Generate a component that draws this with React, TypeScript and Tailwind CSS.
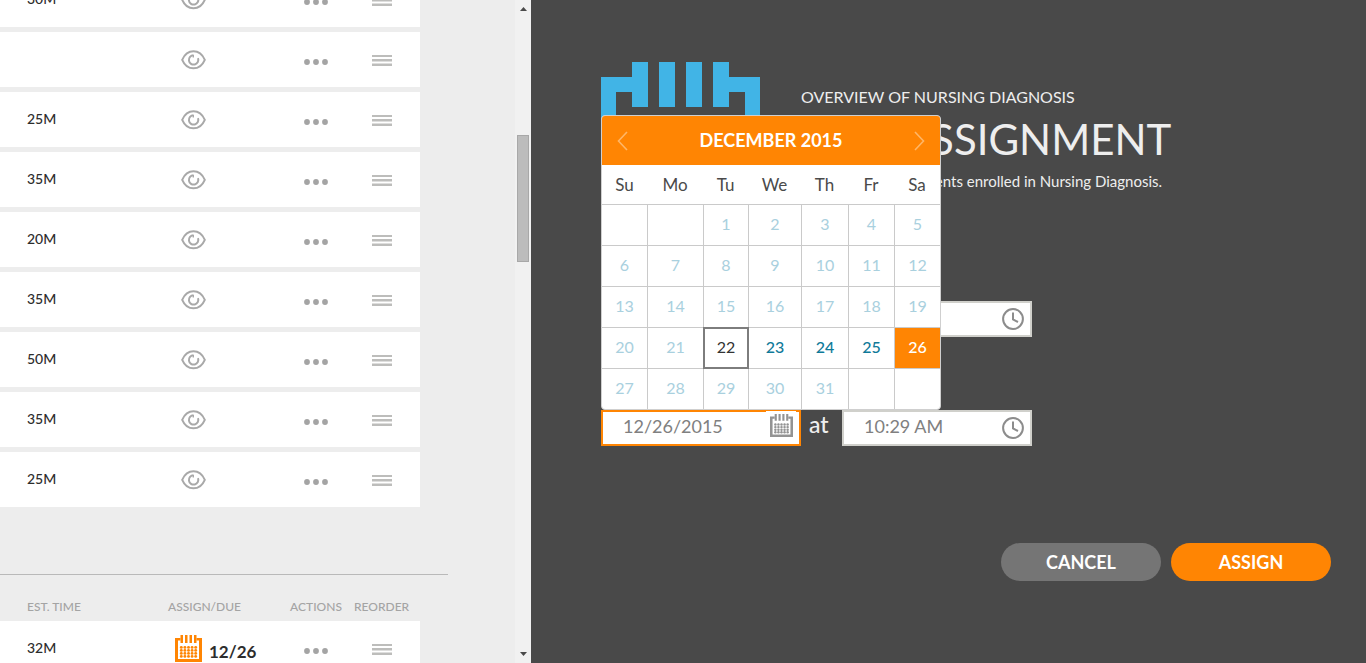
import React from "react";

const times = ["30M", "", "25M", "35M", "20M", "35M", "50M", "35M", "25M"];

const weekdays = ["Su", "Mo", "Tu", "We", "Th", "Fr", "Sa"];
const columnWidths = ["w-[45px]", "w-[56px]", "w-[45px]", "w-[53px]", "w-[47px]", "w-[46px]", "w-[46px]"];
// December 2015 starts on a Tuesday
const weeks = Array.from({ length: 5 }, (_, w) =>
  Array.from({ length: 7 }, (_, d) => {
    const day = w * 7 + d - 1;
    return day >= 1 && day <= 31 ? day : null;
  }),
);

function EyeIcon() {
  return (
    <svg width="25" height="20" viewBox="0 0 25 20" fill="none" stroke="#a9a9a9" strokeWidth="2" aria-hidden="true">
      <path d="M1.2 9.800C3.600 4.400 7.600 1.300 12.500 1.300S21.400 4.400 23.800 9.800C21.400 15.400 17.400 18.300 12.500 18.300S3.600 15.400 1.200 9.800Z" />
      <path d="M12.500 5.200A4.700 4.700 0 1 0 17 8.200" />
      <path d="M12.300 5V7.500" strokeWidth="1.400" />
    </svg>
  );
}

function DotsIcon() {
  return (
    <svg width="24" height="6" viewBox="0 0 24 6" fill="#a4a4a4" aria-hidden="true">
      <circle cx="3" cy="3" r="2.900" />
      <circle cx="12" cy="3" r="2.900" />
      <circle cx="21" cy="3" r="2.900" />
    </svg>
  );
}

function BarsIcon() {
  return (
    <svg width="20" height="11" viewBox="0 0 20 11" aria-hidden="true">
      <path fill="#bdbdbb" d="M0 0H20V2H0ZM0 4H20V6H0ZM0 9H20V11H0Z" />
      <path fill="#dededd" d="M0 6H20V7H0ZM0 8H20V9H0Z" />
    </svg>
  );
}

function CalendarIcon({ size, color }: { size: number; color: string }) {
  const dots = [];
  for (let r = 0; r < 4; r++) {
    for (let c = 0; c < 5; c++) {
      dots.push(<circle key={`${r}-${c}`} cx={6.3 + c * 3.6} cy={12.400 + r * 3} r="1.450" />);
    }
  }
  return (
    <svg width={size} height={size} viewBox="0 0 27 27" fill={color} aria-hidden="true">
      <path d="M0 3H5.500V5.500H3V24H24V5.500H21.500V3H27V27H0Z" />
      <path d="M5.500 0H8V8H5.500ZM10 0H12.500V8H10ZM14.500 0H17V8H14.500ZM19 0H21.500V8H19Z" />
      {dots}
    </svg>
  );
}

function ClockIcon() {
  return (
    <svg width="22" height="22" viewBox="0 0 22 22" fill="none" stroke="#8c8c8c" strokeWidth="2" aria-hidden="true">
      <circle cx="11" cy="11" r="9.900" />
      <path d="M11 4.500V11.500L16 14" />
    </svg>
  );
}

function Columns() {
  return (
    <colgroup>
      <col className="w-[168px]" />
      <col className="w-[115px]" />
      <col className="w-[66px]" />
      <col className="w-[71px]" />
    </colgroup>
  );
}

function ActionCells() {
  return (
    <>
      <td className="pt-1 pl-[21px]">
        <button type="button" aria-label="Actions" className="block"><DotsIcon /></button>
      </td>
      <td className="pt-0.5 pl-[23px]">
        <button type="button" aria-label="Reorder" className="block cursor-move"><BarsIcon /></button>
      </td>
    </>
  );
}

function AssignmentList() {
  return (
    <div className="flex-1 overflow-hidden bg-[#ededed] text-sm text-[#2d2d2d]">
      <table className="-mt-[33px] w-[420px] table-fixed border-separate border-spacing-x-0 border-spacing-y-[5px]">
        <Columns />
        <tbody>
          {times.map((time, i) => (
            <tr key={i} className="h-[55px] bg-white">
              <td className="pb-0.5 pl-[27px] font-medium">{time}</td>
              <td className="pl-[13px]">
                <button type="button" aria-label="Preview" className="block"><EyeIcon /></button>
              </td>
              <ActionCells />
            </tr>
          ))}
        </tbody>
      </table>
      <hr className="mt-[62px] mr-[67px] border-[#b9b9b9]" />
      <table className="mt-5 w-[420px] table-fixed border-separate border-spacing-0">
        <Columns />
        <thead>
          <tr className="h-[26px] text-left text-xs text-[#a4a4a4]">
            <th className="p-0 pb-0.5 pl-[27px] font-medium">EST. TIME</th>
            <th className="p-0 pb-0.5 font-medium">ASSIGN/DUE</th>
            <th className="p-0 pb-0.5 text-center font-medium">ACTIONS</th>
            <th className="p-0 pb-0.5 pl-[5px] font-medium">REORDER</th>
          </tr>
        </thead>
        <tbody>
          <tr className="h-[55px] bg-white">
            <td className="pb-0.5 pl-[27px] font-medium">32M</td>
            <td className="pl-[7px]">
              <div className="flex items-center gap-[7px]">
                <CalendarIcon size={27} color="#ff8503" />
                <span className="pt-1.5 text-[17px] leading-5 font-bold">12/26</span>
              </div>
            </td>
            <ActionCells />
          </tr>
        </tbody>
      </table>
    </div>
  );
}

function ScrollBar() {
  return (
    <div className="flex w-4 flex-none flex-col items-center bg-[#f1f1f1] py-[7px]" aria-hidden="true">
      <svg width="7" height="4" viewBox="0 0 7 4" fill="#4a4a4a"><path d="M3.500 0L7 4H0Z" /></svg>
      <div className="mt-[124px] h-[127px] w-3 border border-[#a8a8a8] bg-[#bcbcbc]" />
      <svg className="mt-auto" width="7" height="4" viewBox="0 0 7 4" fill="#4a4a4a"><path d="M0 0H7L3.500 4Z" /></svg>
    </div>
  );
}

function dayClass(day: number) {
  if (day === 26) return "bg-[#ff8503] text-white font-medium";
  if (day === 22) return "relative text-[#333] outline-2 -outline-offset-1 outline-[#7d7d7d]";
  if (day > 22 && day < 26) return "text-[#0f7a99] font-medium";
  return "text-[#a9d0de]";
}

function DatePicker() {
  return (
    <div className="absolute bottom-full left-0 z-10 w-[340px] overflow-hidden rounded-[4px] border border-[#cfcfcf] bg-white">
      <div className="flex h-[49px] items-center justify-between bg-[#ff8503] px-[15px] text-white">
        <button type="button" aria-label="Previous month">
          <svg width="11" height="20" viewBox="0 0 11 20" fill="none" stroke="#ffb667" strokeWidth="1.600"><path d="M10 1L1.500 10L10 19" /></svg>
        </button>
        <span className="pb-0.5 text-lg font-bold">DECEMBER 2015</span>
        <button type="button" aria-label="Next month">
          <svg width="11" height="20" viewBox="0 0 11 20" fill="none" stroke="#ffb667" strokeWidth="1.600"><path d="M1 1L9.500 10L1 19" /></svg>
        </button>
      </div>
      <table className="w-full table-fixed border-separate border-spacing-0 text-center text-base">
        <colgroup>
          {columnWidths.map((w, i) => <col key={i} className={w} />)}
        </colgroup>
        <thead>
          <tr className="h-[39px] text-[17px] text-[#4a4a4a]">
            {weekdays.map((d) => <th key={d} className="p-0 font-normal">{d}</th>)}
          </tr>
        </thead>
        <tbody>
          {weeks.map((week, w) => (
            <tr key={w} className="h-[41px]">
              {week.map((day, d) => (
                <td key={d} className="border-t border-l border-[#cacaca] p-0 first:border-l-0">
                  {day && (
                    <button type="button" disabled={day < 22 || day > 26} className={`block h-10 w-full pb-0.5 ${dayClass(day)}`}>
                      {day}
                    </button>
                  )}
                </td>
              ))}
            </tr>
          ))}
        </tbody>
      </table>
    </div>
  );
}

const inputClass = "h-9 w-full border-2 bg-white pb-1 pl-5 text-lg text-[#808080] outline-none";

function DateTimeRow({ name, date, time, open }: { name: string; date: string; time: string; open?: boolean }) {
  return (
    <div className="flex items-start">
      <div className="relative w-[200px]">
        {open && <DatePicker />}
        <input aria-label={`${name} date`} defaultValue={date} className={`${inputClass} ${open ? "border-[#ff8503]" : "border-[#d0d0cb]"}`} />
        <button type="button" aria-label={`${name} calendar`} className="absolute top-px right-[5px] flex h-8 w-[30px] justify-center bg-white pt-[3px]">
          <CalendarIcon size={23} color="#939393" />
        </button>
      </div>
      <span className="w-[41px] pl-2 text-[23px] leading-7 font-medium text-[#eee]">at</span>
      <div className="relative w-[190px]">
        <input aria-label={`${name} time`} defaultValue={time} className={`${inputClass} border-[#d0d0cb]`} />
        <button type="button" aria-label={`${name} clock`} className="absolute top-[7px] right-2">
          <ClockIcon />
        </button>
      </div>
    </div>
  );
}

function Logo() {
  return (
    <svg width="160" height="75" viewBox="0 0 160 75" fill="#41b4e6" className="flex-none" role="img" aria-label="Logo">
      <path d="M31 0H47V45H31V30H15V75H0V15H31Z" />
      <path d="M58 0H74V45H58ZM85 0H101V45H85Z" />
      <path d="M112 0H128V15H159V75H144V30H128V45H112Z" />
    </svg>
  );
}

export default function App() {
  return (
    <div className="flex h-screen overflow-hidden font-['Lato','Liberation_Sans',sans-serif]">
      <aside className="flex w-[531px] flex-none">
        <AssignmentList />
        <ScrollBar />
      </aside>
      <main className="flex-1 bg-[#494949] pt-[62px] pr-[35px] pl-[70px] text-[#eee]">
        <header className="flex h-[239px] gap-10">
          <Logo />
          <div className="pt-6">
            <p className="text-base leading-[22px]">OVERVIEW OF NURSING DIAGNOSIS</p>
            <h1 className="text-[42px] leading-[62px] whitespace-nowrap">ADD ASSIGNMENT</h1>
            <p className="text-[15px] leading-[22px]">Send this for all students enrolled in Nursing Diagnosis.</p>
          </div>
        </header>
        <form>
          <div className="flex flex-col gap-[73px]">
            <DateTimeRow name="Assign" date="12/22/2015" time="" />
            <DateTimeRow name="Due" date="12/26/2015" time="10:29 AM" open />
          </div>
          <div className="mt-[97px] flex justify-end gap-2.5 text-lg font-bold text-white">
            <button type="button" className="h-[38px] w-40 rounded-full bg-[#757575]">CANCEL</button>
            <button type="submit" className="h-[38px] w-40 rounded-full bg-[#ff8503]">ASSIGN</button>
          </div>
        </form>
      </main>
    </div>
  );
}
